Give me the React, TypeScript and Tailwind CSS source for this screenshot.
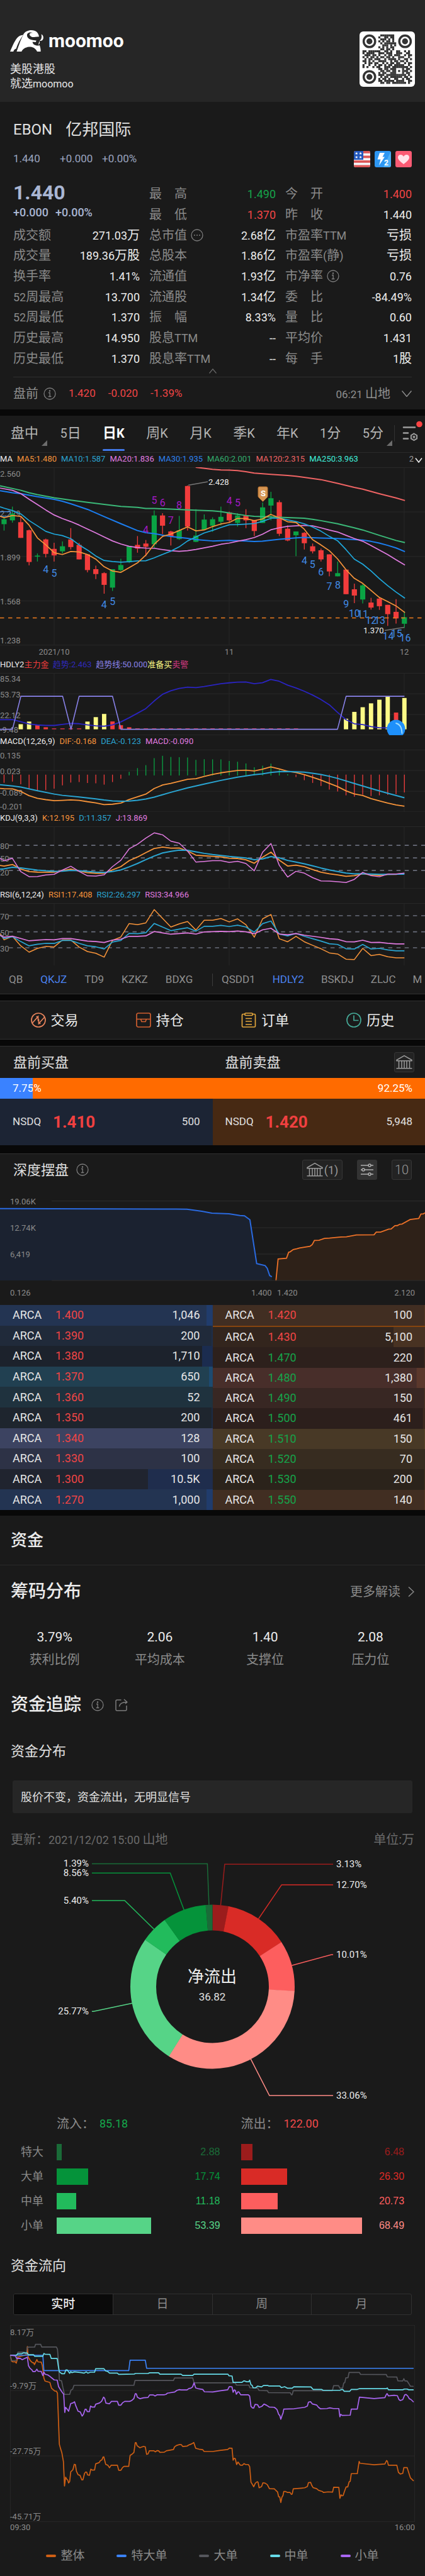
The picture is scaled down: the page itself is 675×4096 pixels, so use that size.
import { useState, type ReactNode } from 'react';
import clsx from 'clsx';

const RED = '#f23c3c';
const GREEN = '#0aa344';
const ORANGE = '#f7943a';
const CYAN = '#2aa5d2';
const PINK = '#e07be0';

// horizontal distance and scale shared by every candle pane
const SX = 0.4305;
const FIRST = 15;
const STEP = 30.77;
const slotX = (i: number) => FIRST + STEP * i;

/* ---------- small pieces ---------- */

function Mix({ text, latin = 'text-[18px]' }: { text: string; latin?: string }) {
  return (
    <>
      {text.split(/([\x20-\x7e]+)/).filter(Boolean).map((part, i) =>
        /^[\x20-\x7e]/.test(part) ? (
          <span key={i} className={latin}>{part}</span>
        ) : (
          part
        )
      )}
    </>
  );
}

function Band({ className }: { className: string }) {
  return <div className={clsx('bg-[#080808]', className)} />;
}

function InfoIcon() {
  return (
    <svg viewBox="0 0 20 20" className="size-5 shrink-0" fill="none" stroke="#7d7d7d" strokeWidth="1.3">
      <circle cx="10" cy="10" r="9" />
      <path d="M8 8.5h2.2v6M7.8 14.5h4.6" />
      <circle cx="10" cy="5.6" r="0.6" fill="#7d7d7d" />
    </svg>
  );
}

function DotsIcon() {
  return (
    <svg viewBox="0 0 20 20" className="size-5 shrink-0" fill="#7d7d7d">
      <circle cx="10" cy="10" r="9" fill="none" stroke="#7d7d7d" strokeWidth="1.3" />
      <circle cx="6" cy="10" r="1" />
      <circle cx="10" cy="10" r="1" />
      <circle cx="14" cy="10" r="1" />
    </svg>
  );
}

function BankIcon() {
  return (
    <svg viewBox="0 0 26 24" className="h-6 w-[26px]" fill="none" stroke="#9a9a9a" strokeWidth="1.5">
      <path d="M1 8.5 13 1.5l12 7v1.2H1zM4.5 10v11M9 10v11M13 10v11M17 10v11M21.5 10v11M0.5 21.8h25" />
    </svg>
  );
}

/* ---------- header ---------- */

const qrRows = [
  '0000000001111111000000000',
  '0000000010011011000000000',
  '0000000001110101000000000',
  '0000000010101101000000000',
  '0000000001011111100000000',
  '0000000000111010100000000',
  '0000000010101011000000000',
  '0000000001101101000000000',
  '1101111110011010011001010',
  '1011110011101110011100110',
  '0111011010010110111001011',
  '1010110101101101001110010',
  '0101101110010111101001101',
  '1101010011110010110110100',
  '0101101100101011011001011',
  '1001001011010110111110010',
  '1010010110011101111111101',
  '0000000011011011100010110',
  '0000000001101101101011101',
  '0000000010110011100010110',
  '0000000011101111111111010',
  '0000000001011011111101101',
  '0000000010110100110010110',
  '0000000011011111011110011',
  '0000000001101101111111010',
];

function QrCode() {
  return (
    <svg viewBox="-1.5 -1.5 28 28" className="size-[88px] rounded-md bg-white">
      {qrRows.map((row, y) =>
        row.split('').map((c, x) => c === '1' && <rect key={`${x}-${y}`} x={x} y={y} width="1.03" height="1.03" fill="#333" />)
      )}
      {[[3.5, 3.5], [21.5, 3.5], [3.5, 21.5]].map(([cx, cy]) => (
        <g key={`${cx}-${cy}`}>
          <circle cx={cx} cy={cy} r="2.9" fill="#fff" stroke="#333" strokeWidth="1.1" />
          <circle cx={cx} cy={cy} r="1.5" fill="#333" />
        </g>
      ))}
    </svg>
  );
}

function Header() {
  return (
    <header className="flex h-[162px] items-start justify-between bg-[#262626] px-4 text-[#e6e6e6]">
      <div className="pt-12">
        <div className="flex items-center gap-2">
          {/* bull: back stripe, body with hooked face, right horn */}
          <svg viewBox="38 216 122 154" preserveAspectRatio="none" className="h-[34px] w-[53px]" fill="#fff">
            <path d="M38 370C46 335 54 295 64 272 70 258 78 251 86 250 74 285 66 312 60 350 55 352 52 358 50 370z" />
            <path d="M62 370C70 325 78 280 87 246 92 226 104 216 116 216 132 216 141 232 144 262L130 265C120 268 113 264 110 252 107 240 114 232 122 236 112 226 100 234 100 252 100 270 108 284 121 287L134 291 132 302 120 300C121 318 128 328 142 327L146 325C149 340 150 354 150 370L137 370C131 343 118 333 107 336 94 339 84 352 80 370z" />
            <path d="M152 246C160 252 162 272 157 286 153 294 148 294 145 293 148 306 146 316 141 322L145 294C153 284 155 266 152 246z" />
          </svg>
          <span className="text-[30px] leading-[34px] font-bold text-white">moomoo</span>
        </div>
        <p className="mt-4 text-[18px] leading-[23px]">美股港股</p>
        <p className="text-[18px] leading-[23px]">就选<span className="text-[16px]">moomoo</span></p>
      </div>
      <div className="pt-[50px]">
        <QrCode />
      </div>
    </header>
  );
}

/* ---------- quote ---------- */

type Stat = { label: string; value: string; tone?: string; icon?: ReactNode };

const stats: Stat[][] = [
  [{ label: '最　高', value: '1.490', tone: 'text-[#16a34a]' }, { label: '今　开', value: '1.400', tone: 'text-[#f04545]' }],
  [{ label: '最　低', value: '1.370', tone: 'text-[#f04545]' }, { label: '昨　收', value: '1.440' }],
  [{ label: '成交额', value: '271.03万' }, { label: '总市值', value: '2.68亿', icon: <DotsIcon /> }, { label: '市盈率TTM', value: '亏损' }],
  [{ label: '成交量', value: '189.36万股' }, { label: '总股本', value: '1.86亿' }, { label: '市盈率(静)', value: '亏损' }],
  [{ label: '换手率', value: '1.41%' }, { label: '流通值', value: '1.93亿' }, { label: '市净率', value: '0.76', icon: <InfoIcon /> }],
  [{ label: '52周最高', value: '13.700' }, { label: '流通股', value: '1.34亿' }, { label: '委　比', value: '-84.49%' }],
  [{ label: '52周最低', value: '1.370' }, { label: '振　幅', value: '8.33%' }, { label: '量　比', value: '0.60' }],
  [{ label: '历史最高', value: '14.950' }, { label: '股息TTM', value: '--' }, { label: '平均价', value: '1.431' }],
  [{ label: '历史最低', value: '1.370' }, { label: '股息率TTM', value: '--' }, { label: '每　手', value: '1股' }],
];

function Quote() {
  return (
    <section>
      <div className="px-[21px] pt-7">
        <h1 className="flex items-center gap-[21px] text-[26px] leading-8 text-[#e0e0e0]">
          <span className="text-[24px]">EBON</span>
          <span>亿邦国际</span>
        </h1>
        <div className="mt-[18px] flex h-[26px] items-center text-[17px] text-[#9ba5c0]">
          <span className="w-[74px]">1.440</span>
          <span className="w-[67px]">+0.000</span>
          <span>+0.00%</span>
          <div className="ml-auto flex gap-[7px]">
            <svg viewBox="0 0 26 26" className="size-[26px] rounded-[3px] bg-[#f4f4f8]">
              {[0, 7.5, 15, 22.5].map((y) => <rect key={y} y={y} width="26" height="3.8" fill="#dc5757" />)}
              <rect width="15" height="14" fill="#2358bd" />
              <g fill="#fff">
                {[[4.2, 4], [10.6, 4], [4.2, 10], [10.6, 10]].map(([x, y]) => (
                  <path key={`${x}${y}`} transform={`translate(${x} ${y})`} d="M0-2.4.6-.8 2.3-.7 1 .4l.5 1.7L0 1.1l-1.5 1L-1 .4l-1.3-1.1L-.6-.8z" />
                ))}
              </g>
            </svg>
            <svg viewBox="0 0 26 26" className="size-[26px] rounded-[3px] bg-[#2e97f3]">
              <path d="M26 0v26H14z" fill="#63c0fa" opacity="0.6" />
              <path d="M8 3h8l-3.5 6.5H16L7 23l2.5-9.5h-5z" fill="#fff" />
              <text x="15" y="23" fontSize="12" fontWeight="700" fill="#fff">2</text>
            </svg>
            <svg viewBox="0 0 26 26" className="size-[26px] rounded-[3px] bg-[#fb5b74]">
              <path d="M13 21C7 16.5 4 13.5 4 10.200 4 7.500 6 6 8.300 6c2 0 3.700 1 4.700 3 1-2 2.700-3 4.700-3C20 6 22 7.500 22 10.200c0 3.300-3 6.300-9 10.800z" fill="#ffe3ea" />
            </svg>
          </div>
        </div>

        <div className="mt-[26px] grid h-[294px] grid-cols-3 grid-rows-9 gap-x-[15px] text-[20px]">
          <div className="row-span-2 text-[#a9b6d3]">
            <div className="pt-0.5 text-[32px] leading-6 font-bold">1.440</div>
            <div className="mt-2 flex gap-[11px] text-[18px] leading-6 font-medium">
              <span>+0.000</span>
              <span>+0.00%</span>
            </div>
          </div>
          {stats.flat().map((s, i) => (
            <div key={i} className="flex items-center justify-between">
              <span className="flex items-center gap-1.5 text-[#8a8a8a]">
                <span><Mix text={s.label} /></span>
                {s.icon}
              </span>
              <span className={s.tone ?? 'text-[#ececec]'}><Mix text={s.value} /></span>
            </div>
          ))}
        </div>

        <div className="flex h-[14px] justify-center border-b border-[#303030]">
          <svg viewBox="0 0 12 8" className="h-2 w-3" fill="none" stroke="#6a6a6a" strokeWidth="1.2"><path d="M.5 7.5 6 .8l5.5 6.7" /></svg>
        </div>
        <div className="flex h-[51px] items-center text-[20px] text-[#8f8f8f]">
          <span className="mr-2">盘前</span>
          <InfoIcon />
          <div className="ml-5 flex gap-5 text-[17px] text-[#f04545]">
            <span>1.420</span>
            <span>-0.020</span>
            <span>-1.39%</span>
          </div>
          <span className="ml-auto"><Mix text="06:21 山地" latin="text-[17px] whitespace-pre" /></span>
          <svg viewBox="0 0 16 10" className="ml-[18px] h-2.5 w-4" fill="none" stroke="#8f8f8f" strokeWidth="1.4"><path d="M.5.5 8 9.5 15.5.5" /></svg>
        </div>
      </div>
    </section>
  );
}

/* ---------- candle charts ---------- */

const periods = ['盘中', '5日', '日K', '周K', '月K', '季K', '年K', '1分', '5分'];

function PeriodTabs() {
  const [active, setActive] = useState('日K');
  return (
    <nav className="flex h-[59px] border-b border-[#2a2a2a] text-[22px] text-[#b4b4b4]">
      <div className="flex flex-1 items-center justify-between pr-[17px] pb-1 pl-[17px]">
        {periods.map((p) => (
          <button
            key={p}
            onClick={() => setActive(p)}
            className={clsx('relative flex h-[54px] items-center whitespace-nowrap', active === p && 'font-bold text-white')}
          >
            <span><Mix text={p} latin="text-[20px]" /></span>
            {active === p && <span className="absolute inset-x-0 -bottom-0.5 h-[3px] rounded-full bg-[#4178e8]" />}
            {(p === '盘中' || p === '5分') && (
              <svg viewBox="0 0 9 9" className="absolute -right-3.5 bottom-1.5 size-[9px]" fill="#6c6c6c"><path d="M9 0v9H0z" /></svg>
            )}
          </button>
        ))}
      </div>
      <div className="mt-[15px] h-[26px] w-px bg-[#333]" />
      <button aria-label="指标设置" className="w-12">
        <svg viewBox="0 0 48 58" className="h-[58px] w-12" fill="none" stroke="#9d9d9d" strokeWidth="2.6" strokeLinecap="round">
          <path d="M14 18.5h18M14 27.5h7M14 36.5h7" />
          <path d="m30.500 28.500 4.600 2.700v5.200l-4.600 2.700-4.600-2.700v-5.200z" strokeWidth="2" />
          <circle cx="30.5" cy="33.8" r="1.3" strokeWidth="1.6" />
          <circle cx="39" cy="13.5" r="4.8" fill="#fb4343" stroke="none" />
        </svg>
      </button>
    </nav>
  );
}

function Legend({ items, tight, children }: { items: [string, string][]; tight?: boolean; children?: ReactNode }) {
  return (
    <div className={clsx('flex h-[23px] items-center pb-1 text-[13px] whitespace-nowrap', !tight && 'gap-[7px]')}>
      {items.map(([text, color]) => (
        <span key={text} style={{ color }} className="whitespace-pre">{text}</span>
      ))}
      {children}
    </div>
  );
}

type PaneProps = {
  height: number;
  top: number;
  sy: number;
  rows?: number[];
  dashed?: number[];
  cols?: number;
  labels: [string, number][];
  over?: ReactNode;
  children: ReactNode;
};

// The g element carries the plotting units, labels stay in page units.
function Pane({ height, top, sy, rows = [], dashed = [], cols, labels, over, children }: PaneProps) {
  const y = (v: number) => (v - top) * sy;
  return (
    <svg viewBox={`0 0 675 ${height}`} className="block w-full" fill="none">
      {rows.map((r) => <path key={r} d={`M0 ${y(r)}H675`} stroke="#292929" />)}
      {[86, 364, 642].map((x) => <path key={x} d={`M${x} 0V${cols ?? height}`} stroke="#262626" />)}
      {dashed.map((r) => <path key={r} d={`M14 ${y(r)}H675`} stroke="#696d7b" strokeWidth="1.7" strokeDasharray="6.5 6.6" />)}
      <g fill="#8a8a8a" fontSize="13">
        {labels.map(([t, v]) => <text key={t} x="0" y={Math.min(y(v) + 5, height - 4)}>{t}</text>)}
      </g>
      <g transform={`scale(${SX} ${sy}) translate(0 ${-top})`} strokeLinejoin="round">{children}</g>
      {over}
    </svg>
  );
}

function Line({ points, color, width = 1.5 }: { points: string; color: string; width?: number }) {
  return <polyline points={points} stroke={color} strokeWidth={width} vectorEffect="non-scaling-stroke" />;
}

// values placed on consecutive candle slots, starting at the left edge
function Series({ values, color, width = 1.5 }: { values: number[]; color: string; width?: number }) {
  const pts = values.map((v, i) => `${i === 0 ? 0 : slotX(i - 1)},${v}`).join(' ');
  return <Line points={pts} color={color} width={width} />;
}

// up, body top, body bottom, high, low
const candles: [number, number, number, number, number][] = [
  [1, 668, 700, 650, 742], [1, 630, 675, 585, 690], [0, 687, 790, 650, 790], [0, 740, 948, 735, 970],
  [1, 906, 913, 892, 945], [0, 800, 895, 795, 918], [0, 862, 905, 822, 945], [1, 845, 878, 813, 893],
  [0, 800, 850, 726, 866], [0, 836, 931, 822, 931], [0, 898, 1001, 898, 1016], [0, 995, 1027, 972, 1060],
  [0, 1021, 1098, 1015, 1156], [1, 995, 1116, 995, 1138], [1, 968, 1001, 927, 1010], [1, 845, 948, 842, 955],
  [0, 836, 860, 778, 887], [0, 827, 848, 804, 910], [1, 643, 832, 610, 855], [0, 643, 710, 628, 765],
  [0, 748, 780, 743, 840], [1, 740, 798, 646, 803], [0, 450, 716, 446, 742], [1, 775, 816, 602, 818],
  [1, 670, 735, 636, 735], [1, 668, 710, 655, 750], [1, 652, 684, 585, 708], [0, 623, 675, 618, 690],
  [1, 643, 692, 628, 716], [0, 645, 675, 602, 726], [0, 675, 745, 672, 778], [1, 590, 692, 558, 692],
  [1, 530, 578, 488, 675], [0, 556, 763, 543, 778], [0, 730, 807, 708, 812], [1, 748, 773, 748, 910],
  [0, 757, 825, 752, 866], [0, 845, 878, 827, 892], [0, 871, 931, 860, 945], [0, 898, 1010, 898, 1042],
  [1, 1021, 1042, 945, 1042], [0, 998, 1159, 998, 1159], [0, 1127, 1168, 1090, 1218], [1, 1101, 1194, 1092, 1220],
  [0, 1214, 1247, 1183, 1260], [0, 1188, 1238, 1180, 1262], [0, 1229, 1290, 1229, 1367], [0, 1275, 1318, 1192, 1352],
  [1, 1310, 1353, 1272, 1380],
];

const BLUE_COUNT = '#418be6';
const PURPLE_COUNT = '#a219c4';

const counts: [string, number, number, string][] = [
  ['4', 169, 995, BLUE_COUNT], ['5', 200, 1020, BLUE_COUNT], ['4', 384, 1225, BLUE_COUNT], ['5', 415, 1207, BLUE_COUNT],
  ['4', 538, 735, PURPLE_COUNT], ['5', 569, 540, PURPLE_COUNT], ['6', 600, 558, PURPLE_COUNT], ['7', 630, 672, PURPLE_COUNT],
  ['8', 661, 575, PURPLE_COUNT], ['4', 846, 546, PURPLE_COUNT], ['5', 877, 558, PURPLE_COUNT],
  ['4', 1123, 938, BLUE_COUNT], ['5', 1153, 961, BLUE_COUNT], ['6', 1184, 1013, BLUE_COUNT], ['7', 1215, 1108, BLUE_COUNT],
  ['8', 1246, 1099, BLUE_COUNT], ['9', 1277, 1222, BLUE_COUNT], ['10', 1307, 1283, BLUE_COUNT], ['11', 1338, 1287, BLUE_COUNT],
  ['12', 1369, 1328, BLUE_COUNT], ['13', 1401, 1328, BLUE_COUNT], ['14', 1432, 1434, BLUE_COUNT], ['15', 1463, 1415, BLUE_COUNT],
  ['16', 1495, 1443, BLUE_COUNT],
];

function CandlePane() {
  const top = 327;
  const sy = 0.2425;
  return (
    <Pane
      height={304} top={top} sy={sy} cols={283}
      rows={[329, 620, 912, 1203, 1493]}
      labels={[['2.560', 367], ['2.229', 627], ['1.899', 915], ['1.568', 1207], ['1.238', 1462]]}
      over={
        <>
          <g fontSize="16" textAnchor="middle">
            {counts.map(([t, x, y, c]) => <text key={x} x={x * SX} y={(y - top) * sy + 6} fill={c}>{t}</text>)}
          </g>
          <g fill="#8a8a8a" fontSize="13" textAnchor="middle">
            <text x="86" y="298">2021/10</text>
            <text x="364" y="298">11</text>
            <text x="642" y="298">12</text>
          </g>
          <path d="M299 28.5 330 23M611 259.5 642 254.500" stroke="#777" strokeWidth="1.5" />
          <g fill="#ececec" fontSize="13">
            <text x="331" y="28">2.428</text>
            <text x="577" y="264">1.370</text>
          </g>
          <path d="M412 31h11a2 2 0 0 1 2 2v13q0 1-1 2l-6.500 6.500L411 48q-1-1-1-2V33a2 2 0 0 1 2-2z" fill="#d69553" stroke="#b8702c" />
          <text x="418" y="46" fontSize="13" fontWeight="700" textAnchor="middle" fill="#fff">S</text>
        </>
      }
    >
      <path d="M0 618H38V648H0" stroke="#418be6" strokeWidth="1.2" vectorEffect="non-scaling-stroke" />
      {candles.map(([up, a, b, hi, lo], i) => (
        <g key={i} fill={up ? GREEN : RED}>
          <rect x={slotX(i) - 9.5} y={a} width="19" height={b - a} />
          <rect x={slotX(i) - 1.5} y={hi} width="3" height={lo - hi} />
        </g>
      ))}
      <Line color="#ef6464" width={2} points="722,327 784,340 815,345 846,346 876,349 907,356 938,365 999,373 1061,381 1092,386 1122,393 1184,408 1245,432 1307,459 1338,470 1399,500 1461,528 1494,545" />
      <Line color="#3bb878" width={2} points="0,449 77,478 107,494 138,506 200,527 261,542 323,557 384,570 446,584 507,590 538,597 569,597 630,601 692,606 753,610 784,613 815,618 846,627 907,643 938,649 999,653 1061,657 1122,661 1153,668 1184,677 1245,697 1307,724 1338,738 1399,773 1461,807 1494,821" />
      <Line color="#1b7ef0" width={2} points="0,481 46,494 77,500 138,520 200,537 230,550 261,566 323,603 384,650 446,697 507,742 538,756 569,762 600,772 630,781 692,793 723,801 784,810 846,806 907,811 938,814 968,812 1030,799 1092,790 1122,787 1184,791 1245,794 1307,801 1338,804 1369,813 1399,824 1430,839 1461,856 1494,880" />
      <Line color={PINK} width={1.7} points="0,463 46,478 77,500 107,536 138,571 169,607 200,640 230,663 261,683 292,706 323,732 353,757 384,784 415,810 446,830 476,845 507,853 538,857 569,858 600,867 630,874 661,878 692,874 723,866 784,845 815,832 846,824 876,812 907,802 938,788 968,766 999,737 1030,724 1061,714 1092,711 1122,708 1153,711 1184,724 1215,739 1245,751 1276,773 1307,794 1338,812 1369,840 1399,869 1430,899 1461,933 1494,968" />
      <Line color="#1fa8dc" width={1.7} points="0,586 15,595 46,611 77,633 107,676 138,711 169,747 200,765 230,775 261,795 292,836 323,870 353,908 384,938 415,945 446,949 476,946 507,941 538,940 569,921 600,898 630,877 661,849 692,810 723,784 753,758 784,741 815,722 846,704 876,703 907,700 938,696 968,682 999,662 1030,660 1061,672 1092,683 1122,697 1153,719 1184,746 1215,780 1245,808 1276,866 1307,929 1338,962 1369,1007 1399,1056 1430,1103 1461,1145 1494,1186" />
      <Line color={ORANGE} width={1.7} points="0,648 15,658 46,643 77,649 107,706 138,790 169,836 200,887 230,899 261,879 292,882 323,899 353,929 384,979 415,1007 446,1016 476,986 507,954 538,903 569,832 600,780 630,765 661,742 692,718 723,744 753,738 784,716 815,699 846,689 876,662 907,663 938,677 968,666 999,636 1030,658 1061,684 1092,689 1122,732 1153,801 1184,836 1215,874 1245,927 1276,997 1307,1055 1338,1088 1369,1135 1399,1180 1430,1207 1461,1236 1494,1280" />
      <path d="M0 1315H1568" stroke="#f07c1e" strokeWidth="1.5" strokeDasharray="6.5 6.5" vectorEffect="non-scaling-stroke" />
    </Pane>
  );
}

const yellowBars: [number, number][] = [[2, 660], [3, 637], [10, 637], [11, 598], [12, 570], [41, 612], [42, 552], [43, 511], [44, 477], [45, 445], [46, 419], [48, 430]];
const redBars: [number, number][] = [[4, 668], [5, 687], [13, 636], [14, 669], [15, 687], [47, 558]];
const flatBars = [6, 7, 8, 9, ...Array.from({ length: 20 }, (_, i) => i + 16)];

function TrendPane() {
  return (
    <Pane
      height={99} top={210} sy={0.1811} rows={[212, 393, 575, 755]}
      labels={[['85.34', 262], ['53.73', 398], ['22.12', 582], ['-9.48', 727]]}
      over={
        <>
          <circle cx="629" cy="89" r="14.5" fill="#1e90fb" />
          <path d="M629 80q9 2 9.5 16" stroke="#9fdcff" strokeWidth="1.8" strokeLinecap="round" />
        </>
      }
    >
      {yellowBars.map(([i, y]) => <rect key={i} x={slotX(i) - 8} y={y} width="16" height={705 - y} fill="#fdfa86" />)}
      {redBars.map(([i, y]) => <rect key={i} x={slotX(i) - 8} y={y} width="16" height={705 - y} fill={RED} />)}
      {flatBars.map((i) => <rect key={i} x={slotX(i) - 8} y="696" width="16" height="9" fill="#c02f45" />)}
      <Line color="#2a24c0" width={1.8} points="0,621 46,619 77,638 107,658 138,667 169,671 200,671 230,662 261,653 292,656 323,666 353,674 384,678 415,666 446,640 476,604 507,564 538,523 569,456 600,397 630,367 661,346 692,335 723,339 753,330 784,317 815,305 846,297 876,291 907,290 938,305 968,296 999,267 1030,283 1061,317 1092,342 1122,370 1153,404 1184,443 1215,490 1245,556 1276,620 1307,656 1338,664 1369,681 1399,691 1430,692" />
      <Line color="#8a83ea" width={1.6} points="0,705 46,705 77,415 231,415 262,705 292,415 415,415 446,705 1245,705 1277,415 1492,415" />
    </Pane>
  );
}

const macd = [
  1174, 1163, 1187, 1229, 1248, 1238, 1225, 1197, 1172, 1167, 1176, 1179, 1190, 1167, 1138, 1078, 1045, 1019, 957, 937, 947, 949, 952,
  973, 967, 968, 969, 983, 989, 1004, 1037, 1024, 1006, 1057, 1099, 1123, 1151, 1175, 1202, 1233, 1250, 1284, 1296, 1278, 1290, 1284,
  1280, 1273, 1258,
];

function MacdPane() {
  return (
    <Pane
      height={99} top={883} sy={0.1811} rows={[886, 1066, 1248, 1429]}
      labels={[['0.135', 935], ['0.023', 1073], ['-0.089', 1256], ['-0.201', 1395]]}
    >
      {macd.map((v, i) => (
        <path key={i} d={`M${slotX(i)} ${v > 1106 ? 1102 : 1110}V${v}`} stroke={v > 1106 ? RED : GREEN} strokeWidth="1.3" vectorEffect="non-scaling-stroke" />
      ))}
      <Line color={ORANGE} width={1.8} points="0,1223 15,1226 46,1227 77,1250 107,1287 138,1310 169,1322 200,1331 230,1328 261,1324 292,1328 323,1340 353,1350 384,1366 415,1362 446,1352 476,1321 538,1273 569,1224 600,1193 630,1179 692,1143 723,1138 753,1118 784,1101 815,1086 846,1076 876,1066 907,1063 938,1070 968,1055 999,1034 1030,1052 1061,1073 1092,1084 1122,1102 1153,1125 1184,1150 1215,1179 1245,1207 1276,1244 1307,1272 1338,1285 1369,1313 1399,1332 1430,1351 1461,1368 1492,1379" />
      <Line color={CYAN} width={2} points="0,1191 46,1202 77,1212 138,1243 200,1273 230,1284 292,1299 353,1315 384,1325 415,1333 446,1336 476,1334 507,1327 538,1317 569,1300 630,1258 692,1218 753,1185 815,1153 876,1124 938,1103 968,1095 999,1083 1030,1076 1061,1075 1092,1077 1122,1081 1153,1090 1184,1101 1215,1117 1245,1135 1307,1180 1369,1224 1430,1265 1492,1305" />
    </Pane>
  );
}

function KdjPane() {
  return (
    <Pane height={99} top={222} sy={0.194} rows={[224, 731]} dashed={[377, 480, 583]} labels={[['80', 383], ['50', 486], ['20', 597]]}>
      <Series color={ORANGE} width={1.8} values={[542, 547, 534, 572, 592, 597, 598, 598, 585, 572, 588, 602, 606, 606, 578, 552, 503, 473, 437, 403, 392, 400, 399, 423, 458, 463, 468, 472, 483, 485, 496, 524, 475, 433, 499, 547, 540, 553, 576, 598, 610, 620, 631, 626, 610, 620, 624, 616, 615, 608]} />
      <Series color={CYAN} width={2} values={[573, 570, 557, 562, 571, 580, 586, 590, 589, 583, 585, 591, 597, 600, 592, 579, 554, 526, 495, 465, 440, 427, 417, 418, 431, 443, 453, 460, 468, 474, 481, 495, 489, 469, 480, 501, 515, 529, 545, 563, 579, 592, 605, 611, 610, 612, 615, 615, 614, 614]} />
      <Series color={PINK} values={[484, 504, 484, 593, 634, 633, 620, 615, 580, 549, 591, 627, 629, 619, 552, 500, 406, 368, 318, 275, 291, 343, 360, 424, 514, 509, 503, 503, 517, 508, 526, 586, 433, 363, 541, 637, 590, 605, 642, 669, 671, 676, 682, 656, 599, 626, 635, 613, 613, 605]} />
    </Pane>
  );
}

function RsiPane() {
  return (
    <Pane height={99} top={850} sy={0.194} rows={[852]} dashed={[953, 1085, 1216]} labels={[['70', 960], ['50', 1090], ['30', 1220]]}>
      <Series color={ORANGE} values={[1098, 1151, 1122, 1200, 1252, 1221, 1205, 1209, 1152, 1152, 1210, 1247, 1261, 1293, 1155, 1128, 1017, 1026, 1012, 903, 975, 1046, 1020, 1001, 1071, 990, 990, 976, 1004, 979, 1027, 1129, 979, 943, 1142, 1167, 1122, 1167, 1196, 1224, 1258, 1267, 1310, 1312, 1221, 1280, 1270, 1289, 1299, 1299]} />
      <Series color={CYAN} width={1.7} values={[1110, 1140, 1125, 1165, 1200, 1187, 1180, 1181, 1156, 1156, 1180, 1200, 1208, 1226, 1169, 1156, 1098, 1101, 1093, 1017, 1046, 1076, 1063, 1052, 1080, 1040, 1040, 1032, 1042, 1031, 1046, 1088, 1018, 997, 1104, 1119, 1099, 1122, 1142, 1161, 1183, 1189, 1224, 1226, 1189, 1226, 1221, 1233, 1241, 1241]} />
      <Series color={PINK} width={1.7} values={[1115, 1129, 1121, 1140, 1159, 1153, 1149, 1151, 1141, 1141, 1151, 1161, 1165, 1173, 1153, 1145, 1122, 1123, 1119, 1083, 1094, 1105, 1099, 1094, 1104, 1086, 1084, 1081, 1084, 1079, 1085, 1101, 1069, 1056, 1103, 1110, 1099, 1113, 1122, 1131, 1142, 1147, 1166, 1168, 1154, 1173, 1172, 1179, 1184, 1184]} />
    </Pane>
  );
}

function Indicators() {
  const main = ['QB', 'QKJZ', 'TD9', 'KZKZ', 'BDXG'];
  const sub = ['QSDD1', 'HDLY2', 'BSKDJ', 'ZLJC', 'M'];
  const [on, setOn] = useState(['QKJZ', 'HDLY2']);
  const toggle = (k: string) => setOn(on.includes(k) ? on.filter((x) => x !== k) : [...on, k]);
  const button = (k: string) => (
    <button key={k} onClick={() => toggle(k)} className={on.includes(k) ? 'text-[#4b82f0]' : 'text-[#8f8f8f]'}>{k}</button>
  );
  return (
    <div className="flex h-[46px] items-center overflow-hidden border-b border-[#303030] pl-[14px] text-[17px] whitespace-nowrap">
      <div className="flex w-[323px] shrink-0 gap-[28px]">{main.map(button)}</div>
      <div className="h-5 w-px shrink-0 bg-[#3c3c3c]" />
      <div className="flex shrink-0 gap-[27px] pl-[14px]">{sub.map(button)}</div>
    </div>
  );
}

function Charts() {
  return (
    <section>
      <PeriodTabs />
      <Legend
        items={[['MA', '#ececec'], ['MA5:1.480', ORANGE], ['MA10:1.587', CYAN], ['MA20:1.836', PINK], ['MA30:1.935', '#2d80ee'], ['MA60:2.001', '#32ad6d'], ['MA120:2.315', '#ef6464'], ['MA250:3.963', '#3ff0dc']]}
      >
        <span className="ml-auto flex items-center gap-0.5 pr-1 text-[#9a9a9a]">
          2
          <svg viewBox="0 0 12 8" className="mt-1 h-2 w-3" fill="none" stroke="#eee" strokeWidth="1.6"><path d="m1 .5 5 6.5 5-6.5" /></svg>
        </span>
      </Legend>
      <CandlePane />
      <Legend tight items={[['HDLY2', '#ececec'], ['主力金', '#f23c3c'], ['  趋势:2.463', '#2f29bd'], ['  趋势线:50.000', '#8a83ea'], ['准备买', '#fdfa86'], ['卖警', '#d63a82']]} />
      <TrendPane />
      <Legend items={[['MACD(12,26,9)', '#ececec'], ['DIF:-0.168', ORANGE], ['DEA:-0.123', CYAN], ['MACD:-0.090', PINK]]} />
      <MacdPane />
      <Legend items={[['KDJ(9,3,3)', '#ececec'], ['K:12.195', ORANGE], ['D:11.357', CYAN], ['J:13.869', PINK]]} />
      <KdjPane />
      <Legend items={[['RSI(6,12,24)', '#ececec'], ['RSI1:17.408', ORANGE], ['RSI2:26.297', CYAN], ['RSI3:34.966', PINK]]} />
      <RsiPane />
      <Indicators />
    </section>
  );
}

/* ---------- trading ---------- */

const actions: { label: string; icon: ReactNode }[] = [
  {
    label: '交易',
    icon: (
      <g stroke="#e8845c">
        <circle cx="12" cy="12" r="11" />
        <path d="M2 17 11.5 6.5v7M22 7l-9.500 10.500v-7M8.5 6.5h3M15.5 17.5h-3" />
      </g>
    ),
  },
  {
    label: '持仓',
    icon: (
      <g stroke="#cf5f30">
        <rect x="1" y="1" width="22" height="22" rx="2.5" />
        <path d="M1 10.5h22M7.5 10.5l1.500 4h6l1.500-4" />
      </g>
    ),
  },
  {
    label: '订单',
    icon: (
      <g stroke="#e3a63c">
        <path d="M6 2.5H3q-1.500 0-1.500 1.500v17.500Q1.500 23 3 23h18q1.500 0 1.500-1.500V4q0-1.500-1.500-1.500h-3" />
        <rect x="6" y="1" width="12" height="3.5" rx="1" />
        <path d="M7 9.5h10M7 14h10M7 19h10" />
      </g>
    ),
  },
  {
    label: '历史',
    icon: (
      <g stroke="#45a896">
        <circle cx="12" cy="12" r="11" />
        <path d="M12 4.5V12.5h7.500" />
      </g>
    ),
  },
];

function Actions() {
  return (
    <section className="grid h-[62px] grid-cols-4 border-y border-[#303030] px-[3px]">
      {actions.map((a) => (
        <button key={a.label} className="flex items-center justify-center gap-2 text-[22px] text-[#ececec]">
          <svg viewBox="0 0 24 24" className="size-6" fill="none" strokeWidth="1.7">{a.icon}</svg>
          {a.label}
        </button>
      ))}
    </section>
  );
}

function BidAsk() {
  return (
    <section className="border-t border-[#303030] text-[17px] text-[#e0e0e0]">
      <div className="grid h-[50px] grid-cols-2 text-[22px]">
        <h2 className="flex items-center pl-[21px]">盘前买盘</h2>
        <div className="flex items-center justify-between pr-[17px] pl-5">
          <h2>盘前卖盘</h2>
          <button aria-label="交易所" className="flex size-8 items-center justify-center rounded-[3px] border border-[#363636] bg-[#232323]">
            <BankIcon />
          </button>
        </div>
      </div>
      <div className="relative flex h-[33px] items-center justify-between bg-[#ff6b00] px-5 text-[17px] text-white">
        <div className="absolute inset-y-0 left-0 bg-[#3a82ff]" style={{ width: '7.75%' }} />
        <span className="relative">7.75%</span>
        <span className="relative">92.25%</span>
      </div>
      <div className="grid h-[74px] grid-cols-2">
        <div className="flex items-center bg-[#1c2434] px-5">
          <span className="w-[64px]">NSDQ</span>
          <span className="text-[26px] font-bold text-[#f04040]">1.410</span>
          <span className="ml-auto">500</span>
        </div>
        <div className="flex items-center bg-[#472913] px-5">
          <span className="w-[64px]">NSDQ</span>
          <span className="text-[26px] font-bold text-[#f04040]">1.420</span>
          <span className="ml-auto">5,948</span>
        </div>
      </div>
    </section>
  );
}

type Level = { price: string; qty: string; bg: string; bar: string; share: number; up?: boolean };

const bids: Level[] = [
  { price: '1.400', qty: '1,046', bg: '#233452', bar: '#203c6c', share: 3 },
  { price: '1.390', qty: '200', bg: '#202a3a', bar: '#1d2f4c', share: 0.6 },
  { price: '1.380', qty: '1,710', bg: '#1c222c', bar: '#1b2c4f', share: 5.1 },
  { price: '1.370', qty: '650', bg: '#214051', bar: '#1d4a70', share: 1.8 },
  { price: '1.360', qty: '52', bg: '#1f323e', bar: '#1f323e', share: 0 },
  { price: '1.350', qty: '200', bg: '#1e252e', bar: '#1b2c46', share: 0.6 },
  { price: '1.340', qty: '128', bg: '#3c4361', bar: '#3c4361', share: 0 },
  { price: '1.330', qty: '100', bg: '#2d3246', bar: '#2d3246', share: 0 },
  { price: '1.300', qty: '10.5K', bg: '#20242f', bar: '#1f2d4d', share: 30.5 },
  { price: '1.270', qty: '1,000', bg: '#233452', bar: '#203c6c', share: 3 },
];

const asks: Level[] = [
  { price: '1.420', qty: '100', bg: '#412e22', bar: '#4f3522', share: 0.5 },
  { price: '1.430', qty: '5,100', bg: '#33251d', bar: '#483222', share: 14.9 },
  { price: '1.470', qty: '220', bg: '#2d201c', bar: '#3f2a1e', share: 0.7, up: true },
  { price: '1.480', qty: '1,380', bg: '#482e2a', bar: '#5b382c', share: 4, up: true },
  { price: '1.490', qty: '150', bg: '#382723', bar: '#4a3022', share: 0.5, up: true },
  { price: '1.500', qty: '461', bg: '#2c1f1c', bar: '#3d291e', share: 1.3, up: true },
  { price: '1.510', qty: '150', bg: '#483926', bar: '#564126', share: 0.5, up: true },
  { price: '1.520', qty: '70', bg: '#372c20', bar: '#372c20', share: 0, up: true },
  { price: '1.530', qty: '200', bg: '#2b231b', bar: '#3c2c1c', share: 0.6, up: true },
  { price: '1.550', qty: '140', bg: '#412e22', bar: '#4f3522', share: 0.5, up: true },
];

function Levels({ label, rows, marked }: { label: string; rows: Level[]; marked?: boolean }) {
  return (
    <table aria-label={label} className="h-[326px] w-full text-[18px] leading-6 text-[#e6e6e6]">
      <tbody>
        {rows.map((r, i) => (
          <tr
            key={r.price}
            className={clsx(marked && i === 0 && 'border-b-2 border-[#86450f]')}
            style={{ background: `linear-gradient(to left, ${r.bar} ${r.share}%, ${r.bg} ${r.share}%)` }}
          >
            <td className="w-[88px] pl-5">ARCA</td>
            <td className={r.up ? 'text-[#16a34a]' : 'text-[#f04545]'}>{r.price}</td>
            <td className="pr-5 text-right">{r.qty}</td>
          </tr>
        ))}
      </tbody>
    </table>
  );
}

function DepthChart() {
  const bid = '0,534 650,538 690,540 745,558 782,574 845,579 885,595 902,597 922,632 947,1017 960,1024 978,1034 986,1058 995,1122 1003,1132';
  const ask = '1018,1168 1026,976 1057,969 1065,917 1070,914 1082,893 1095,887 1105,880 1144,864 1152,850 1160,813 1177,812 1197,795 1216,793 1258,783 1278,782 1315,765 1380,764 1388,740 1404,740 1434,714 1443,713 1457,684 1466,683 1475,671 1483,670 1513,630 1545,620 1553,582 1562,580 1568,571';
  const y = (v: number) => (v - 331) * 0.1811;
  return (
    <svg viewBox="0 0 675 190" className="block w-full" fill="none">
      {[467, 702, 933].map((v) => <path key={v} d={`M82 ${y(v)}H675`} stroke="#292929" strokeWidth="1.3" />)}
      <g transform={`scale(${SX} 0.1811) translate(0 -331)`}>
        <polygon points={`0,1165 ${bid} 1003,1165`} fill="#1b2230" />
        <polygon points={`${ask} 1568,1165`} fill="#2e2118" />
        <Line points={bid} color="#2a6ae0" width={2} />
        <Line points={ask} color="#ee7228" width={1.8} />
      </g>
      <path d={`M82 ${y(1165)}H675`} stroke="#292929" strokeWidth="1.3" />
      <g fill="#8a8a8a" fontSize="13">
        <text x="16" y="30">19.06K</text>
        <text x="16" y="72">12.74K</text>
        <text x="16" y="114">6,419</text>
        <text x="16" y="175">0.126</text>
        <text x="399" y="175">1.400</text>
        <text x="440" y="175">1.420</text>
        <text x="659" y="175" textAnchor="end">2.120</text>
      </g>
    </svg>
  );
}

function Depth() {
  return (
    <section className="border-t border-[#303030]">
      <div className="flex h-[50px] items-center px-[21px] text-[#9a9a9a]">
        <h2 className="mr-3 text-[22px] text-[#e0e0e0]">深度摆盘</h2>
        <InfoIcon />
        <div className="ml-auto flex gap-[23px]">
          <button className="flex h-8 w-16 items-center justify-center gap-0.5 rounded-[3px] border border-[#363636] bg-[#232323] text-[18px]">
            <BankIcon />(1)
          </button>
          <button aria-label="筛选" className="flex size-8 items-center justify-center rounded-[3px] bg-[#333]">
            <svg viewBox="0 0 20 20" className="size-5" fill="#333" stroke="#b0b0b0" strokeWidth="1.5">
              <path d="M0 3h20M0 10h20M0 17h20" />
              <circle cx="14" cy="3" r="2" />
              <circle cx="4" cy="10" r="2" />
              <circle cx="14" cy="17" r="2" />
            </svg>
          </button>
          <button className="flex size-8 items-center justify-center rounded-[3px] border border-[#363636] bg-[#232323] text-[20px] font-light">10</button>
        </div>
      </div>
      <DepthChart />
      <div className="grid grid-cols-2">
        <Levels label="买盘" rows={bids} />
        <Levels label="卖盘" rows={asks} marked />
      </div>
    </section>
  );
}

/* ---------- capital ---------- */

const slices = [
  { value: 3.13, color: '#9b1c1c', line: '814,430 829,210 1229,210', label: '3.13%', x: 534, y: 24 },
  { value: 12.7, color: '#d92b26', line: '954,501 1039,320 1229,320', label: '12.70%', x: 534, y: 57 },
  { value: 10.01, color: '#fd5e5e', line: '1076,751 1223,693 1229,693', label: '10.01%', x: 534, y: 168 },
  { value: 33.06, color: '#ff8c86', line: '925,1250 994,1445 1229,1445', label: '33.06%', x: 534, y: 392 },
  { value: 25.77, color: '#56d487', line: '488,952 345,996 339,996', label: '25.77%', x: 141, y: 258 },
  { value: 5.4, color: '#22bb5c', line: '568,557 460,404 339,404', label: '5.40%', x: 141, y: 82 },
  { value: 8.56, color: '#05933a', line: '679,455 628,257 339,257', label: '8.56%', x: 141, y: 38 },
  { value: 1.37, color: '#1a6b38', line: '771,427 765,208 339,208', label: '1.39%', x: 141, y: 23 },
];

function Donut() {
  let sum = 0;
  return (
    <svg viewBox="0 0 675 423" className="block w-full" fill="none">
      {slices.map((s) => {
        const start = sum;
        sum += s.value;
        return (
          <circle
            key={s.label} cx="337.5" cy="219" r="110" stroke={s.color} strokeWidth="41" pathLength="100"
            strokeDasharray={`${s.value + 0.05} 100`} strokeDashoffset={-start} transform="rotate(-90 337.5 219)"
          />
        );
      })}
      <g transform={`scale(${SX} 0.2979) translate(0 -129)`}>
        {slices.map((s) => <Line key={s.label} points={s.line} color={s.color} />)}
      </g>
      <g fill="#ececec" fontSize="15">
        {slices.map((s) => <text key={s.label} x={s.x} y={s.y + 5} textAnchor={s.x < 300 ? 'end' : 'start'}>{s.label}</text>)}
      </g>
      <text x="337" y="212" fontSize="26" textAnchor="middle" fill="#ececec">净流出</text>
      <text x="337" y="241" fontSize="17" textAnchor="middle" fill="#e0e0e0">36.82</text>
    </svg>
  );
}

const flows = [
  { name: '特大', inflow: 2.88, out: 6.48, inColor: '#1a6b38', outColor: '#9b1c1c' },
  { name: '大单', inflow: 17.74, out: 26.3, inColor: '#05933a', outColor: '#d92b26' },
  { name: '中单', inflow: 11.18, out: 20.73, inColor: '#22bb5c', outColor: '#fd5e5e' },
  { name: '小单', inflow: 53.39, out: 68.49, inColor: '#56d487', outColor: '#ff8c86' },
];

function FlowBar({ value, color }: { value: number; color: string }) {
  return (
    <div className="flex flex-1 items-center font-['Liberation_Sans',sans-serif] text-[16px]">
      <div className="flex-1">
        <div className="h-[26px]" style={{ width: `${value * 1.28}%`, background: color }} />
      </div>
      <span className="w-10 text-right" style={{ color }}>{value.toFixed(2)}</span>
    </div>
  );
}

const flowLines: { name: string; color: string; points: string }[] = [
  {
    name: '整体', color: '#cf5f14',
    points: '38,330 43,363 48,367 56,366 60,374 66,340 90,330 98,326 101,281 104,340 112,360 120,372 124,372 127,382 136,354 140,367 152,368 156,386 162,458 166,474 184,482 190,514 202,530 208,531 212,542 219,828 223,850 228,874 234,925 238,1061 242,1012 246,1022 250,1028 253,1044 257,1036 261,982 269,970 274,940 278,941 282,978 288,998 295,1001 302,1027 306,1026 312,990 316,983 320,984 323,999 330,1001 335,967 340,972 349,971 353,937 366,930 370,920 376,915 380,900 383,898 390,940 398,945 404,959 410,945 433,945 438,973 446,973 452,958 458,951 475,951 480,890 488,882 494,874 499,819 502,818 506,836 516,847 529,840 536,842 541,884 546,882 551,864 568,864 573,870 580,863 585,864 590,873 606,872 614,864 640,857 644,842 652,834 660,830 669,830 674,840 690,838 696,832 703,828 710,823 715,818 722,850 734,855 748,858 753,868 785,868 810,862 840,857 846,849 856,850 860,917 864,906 868,908 873,941 878,927 886,944 894,945 900,936 906,941 916,941 921,952 926,1040 931,1052 936,1065 942,1045 949,1037 952,1040 956,1071 965,1064 970,1043 978,1045 986,1053 994,1076 1012,1077 1018,1086 1024,1094 1028,1121 1032,1122 1036,1153 1040,1124 1044,1114 1047,1092 1054,1092 1060,1097 1070,1097 1075,1108 1078,1106 1082,1077 1112,1073 1124,1071 1134,1064 1138,1042 1146,1041 1150,1057 1155,1070 1168,1076 1175,1085 1190,1092 1193,1097 1210,1094 1227,1095 1231,1068 1250,1069 1254,1130 1258,1110 1262,1116 1266,1114 1270,1095 1277,1066 1283,1066 1288,1038 1292,1035 1296,992 1318,992 1325,924 1328,934 1380,942 1420,938 1426,919 1429,922 1433,945 1464,945 1470,985 1477,994 1486,990 1490,958 1502,958 1508,987 1514,1015 1526,1033',
  },
  {
    name: '特大单', color: '#3b82f6',
    points: '38,330 158,330 162,416 475,416 480,358 536,358 541,403 1526,403',
  },
  {
    name: '大单', color: '#55565c',
    points: '38,330 42,360 60,360 66,313 90,313 96,324 101,285 128,284 131,269 150,269 154,284 208,284 212,296 216,370 219,470 227,473 232,510 238,549 257,549 262,524 268,520 273,498 494,498 498,471 640,471 644,457 711,457 716,484 868,484 872,497 918,497 922,512 950,513 956,527 986,528 991,539 1071,540 1075,551 1078,550 1082,528 1226,528 1231,500 1249,500 1254,514 1264,514 1268,486 1272,483 1276,456 1284,455 1288,426 1326,426 1330,437 1425,438 1429,451 1464,452 1468,473 1486,474 1490,461 1494,474 1502,474 1508,488 1514,503 1526,504',
  },
  {
    name: '中单', color: '#67dbe8',
    points: '38,330 60,330 66,322 80,322 86,317 100,317 104,327 124,327 128,336 158,336 162,320 166,324 184,325 189,348 211,348 215,390 219,423 228,433 238,433 243,412 248,412 257,431 261,421 265,427 275,423 300,427 310,430 318,423 324,430 333,425 349,425 353,405 383,405 390,418 398,421 404,430 433,430 438,437 495,435 500,432 546,432 552,428 585,428 590,436 668,436 674,443 711,443 716,436 841,436 845,445 856,446 860,482 892,482 900,473 910,478 918,478 921,469 926,495 930,498 934,512 943,512 950,503 965,507 972,499 988,499 992,502 1032,502 1038,511 1050,506 1060,514 1078,514 1084,506 1147,507 1155,521 1186,521 1192,526 1254,526 1260,522 1265,522 1270,532 1290,532 1296,521 1318,521 1325,517 1425,517 1429,513 1433,523 1486,523 1492,519 1502,519 1508,523 1526,523',
  },
  {
    name: '小单', color: '#a966f2',
    points: '38,330 56,333 62,348 74,347 82,355 93,347 101,341 105,388 110,402 118,412 121,421 130,421 136,408 140,419 152,420 158,444 162,424 166,436 176,440 184,448 200,468 211,469 216,505 222,520 228,534 235,548 239,650 242,621 248,632 253,643 261,600 270,596 275,590 279,610 288,643 296,647 303,670 308,660 314,632 318,632 322,645 330,645 334,614 340,620 349,620 353,604 367,597 375,587 382,564 386,570 391,598 404,601 411,588 433,588 438,609 446,609 452,596 460,588 478,588 486,583 494,572 499,545 503,546 507,565 516,573 530,568 546,566 552,552 566,552 572,558 580,551 605,551 612,549 618,542 645,535 653,526 662,522 668,524 690,524 697,516 704,514 710,508 716,484 722,513 734,518 748,521 754,534 785,535 810,529 840,523 846,505 856,507 860,537 864,524 868,526 872,548 878,534 882,536 888,551 916,551 921,558 926,616 932,625 936,625 941,605 950,606 956,622 966,616 974,603 984,610 994,620 1012,621 1018,628 1022,634 1028,660 1032,666 1036,688 1041,665 1044,654 1047,631 1085,629 1124,621 1134,614 1138,592 1146,590 1152,602 1168,608 1175,621 1182,629 1206,628 1217,624 1230,628 1250,628 1254,674 1257,660 1262,666 1292,665 1296,631 1318,631 1326,564 1380,572 1420,567 1424,553 1428,544 1433,557 1454,554 1466,556 1472,578 1477,583 1486,578 1493,552 1498,549 1504,557 1510,573 1516,577 1526,592',
  },
];

function FlowChart() {
  const y = (v: number) => (v - 105) * 0.2844;
  return (
    <svg viewBox="0 0 675 369" className="block w-full" fill="none">
      <rect x="16.5" y="16.5" width="642" height="312" stroke="#262626" />
      <path d={`M16 ${y(527)}H659M16 ${y(893)}H659`} stroke="#292929" />
      <g fill="#8a8a8a" fontSize="13">
        <text x="16" y="32">8.17万</text>
        <text x="16" y="117">-9.79万</text>
        <text x="16" y="221">-27.75万</text>
        <text x="16" y="325">-45.71万</text>
        <text x="16" y="342">09:30</text>
        <text x="659" y="342" textAnchor="end">16:00</text>
      </g>
      <g transform={`scale(${SX} 0.2844) translate(0 -105)`} strokeLinejoin="round">
        {flowLines.map((l) => <Line key={l.name} points={l.points} color={l.color} width={1.7} />)}
      </g>
    </svg>
  );
}

const chips = [['3.79%', '获利比例'], ['2.06', '平均成本'], ['1.40', '支撑位'], ['2.08', '压力位']];

function Capital() {
  const [range, setRange] = useState('实时');
  return (
    <section className="pb-[19px]">
      <h2 className="flex h-[79px] items-center border-b border-[#2a2a2a] pl-[17px] text-[26px] font-medium text-[#ececec]">资金</h2>
      <div className="flex h-[84px] items-center justify-between px-[17px]">
        <h3 className="text-[28px] font-medium text-[#ececec]">筹码分布</h3>
        <a href="#chips" className="flex items-center gap-3 text-[20px] text-[#8a8a8a]">
          更多解读
          <svg viewBox="0 0 10 16" className="h-4 w-2.5" fill="none" stroke="#8a8a8a" strokeWidth="1.5"><path d="m1 .5 8 7.500-8 7.500" /></svg>
        </a>
      </div>
      <dl className="grid grid-cols-4 px-[3px] pt-[18px] text-center leading-6">
        {chips.map(([value, label]) => (
          <div key={label} className="flex flex-col-reverse gap-3">
            <dt className="text-[20px] text-[#8a8a8a]">{label}</dt>
            <dd className="text-[21px] text-[#ececec]">{value}</dd>
          </div>
        ))}
      </dl>
      <div className="flex h-[120px] items-center px-[17px]">
        <h3 className="mr-4 text-[28px] font-medium text-[#ececec]">资金追踪</h3>
        <InfoIcon />
        <button aria-label="分享" className="ml-[18px]">
          <svg viewBox="0 0 20 20" className="size-5" fill="none" stroke="#7d7d7d" strokeWidth="1.5">
            <path d="M9.5 2H3Q1 2 1 4v13q0 2 2 2h13q2 0 2-2v-6M6.5 12.5C7 8 10 5.500 18.500 5.500M14 1l4.800 4.500L16 8" />
          </svg>
        </button>
      </div>
      <h4 className="px-[17px] text-[22px] leading-7 text-[#e0e0e0]">资金分布</h4>
      <p className="mx-5 mt-8 flex h-[52px] items-center rounded-[3px] bg-[#262626] pl-[13px] text-[18px] text-[#e0e0e0]">股价不变，资金流出，无明显信号</p>
      <div className="mt-7 flex justify-between px-[17px] text-[20px] leading-7 text-[#6b6b6b]">
        <span><Mix text="更新：2021/12/02 15:00 山地" latin="text-[18px] whitespace-pre" /></span>
        <span>单位:万</span>
      </div>
      <Donut />

      <div className="px-[33px]">
        <div className="flex gap-[33px] pl-[57px] text-[20px] leading-7 text-[#8a8a8a]">
          <div className="flex flex-1 gap-2">流入：<span className="text-[18px] text-[#14a74a]">85.18</span></div>
          <div className="flex flex-1 gap-2">流出：<span className="text-[18px] text-[#f04a4a]">122.00</span></div>
        </div>
        <div className="mt-[11px]">
          {flows.map((f) => (
            <div key={f.name} className="flex h-[39px] items-center">
              <span className="w-[57px] text-[18px] text-[#8a8a8a]">{f.name}</span>
              <div className="flex flex-1 gap-[33px]">
                <FlowBar value={f.inflow} color={f.inColor} />
                <FlowBar value={f.out} color={f.outColor} />
              </div>
            </div>
          ))}
        </div>
      </div>

      <h4 className="mt-[31px] px-[17px] text-[22px] leading-7 text-[#e0e0e0]">资金流向</h4>
      <div className="mx-[21px] mt-[30px] grid h-[34px] grid-cols-4 divide-x divide-[#303030] overflow-hidden rounded-[3px] border border-[#303030] text-[19px]">
        {['实时', '日', '周', '月'].map((r) => (
          <button key={r} onClick={() => setRange(r)} className={range === r ? 'bg-[#0a0a0a] font-medium text-[#ececec]' : 'text-[#8a8a8a]'}>{r}</button>
        ))}
      </div>
      <FlowChart />
      <div className="flex justify-center gap-[51px] text-[19px] leading-7 text-[#8a8a8a]">
        {flowLines.map((l) => (
          <span key={l.name} className="flex items-center gap-[7px]">
            <span className="h-1 w-4 rounded-full" style={{ background: l.color }} />
            {l.name}
          </span>
        ))}
      </div>
    </section>
  );
}

export default function App() {
  return (
    <main className="bg-[#1a1a1a] font-[Roboto,'Noto_Sans_CJK_SC',sans-serif]">
      <Header />
      <Quote />
      <Band className="h-[10px]" />
      <Charts />
      <Band className="h-[10px]" />
      <Actions />
      <Band className="h-[10px]" />
      <BidAsk />
      <Band className="h-[13px]" />
      <Depth />
      <Band className="h-[9px]" />
      <Capital />
    </main>
  );
}
